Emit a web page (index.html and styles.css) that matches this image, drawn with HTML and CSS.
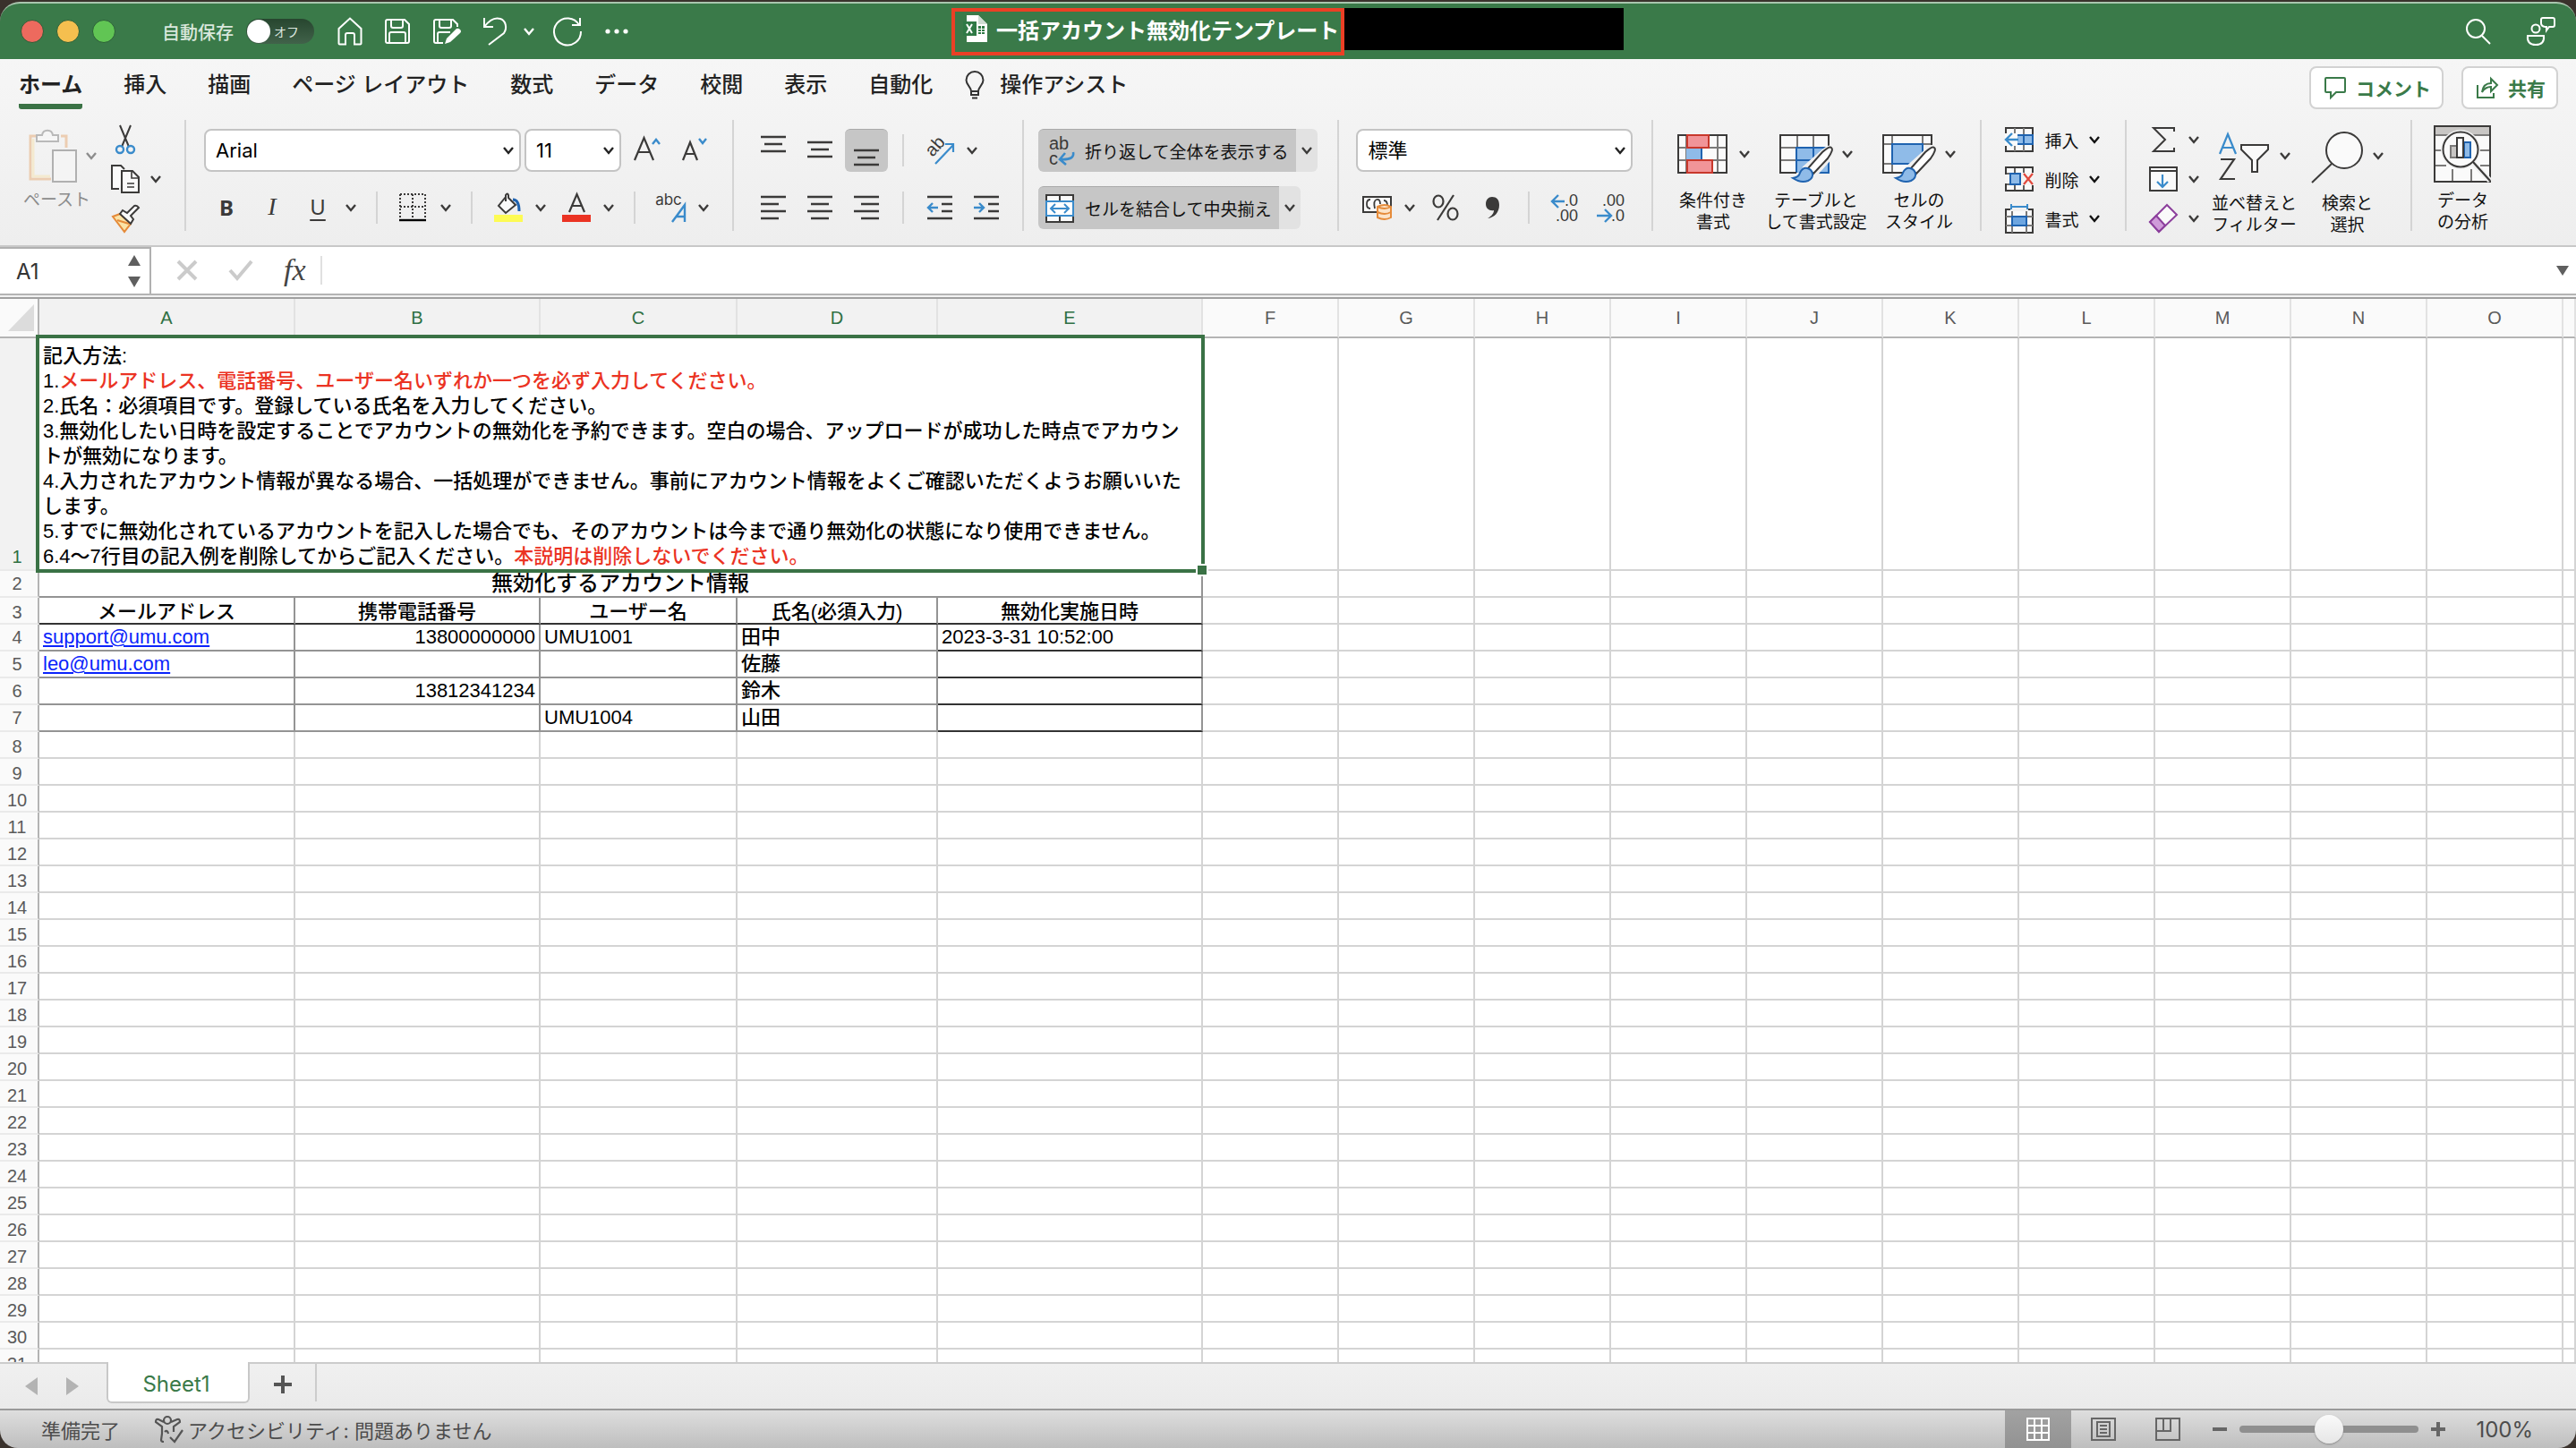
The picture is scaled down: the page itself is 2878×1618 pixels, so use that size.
FILE: index.html
```html
<!DOCTYPE html>
<html lang="ja">
<head>
<meta charset="utf-8">
<title>一括アカウント無効化テンプレート</title>
<link rel="stylesheet" href="styles.css">
</head>
<body>
<svg class="defs" aria-hidden="true">
  <symbol id="chev" viewBox="0 0 12 9"><path d="M1 1l5 6 5-6" fill="none" stroke="currentColor" stroke-width="2.4"/></symbol>
</svg>
<div class="window">
  <header class="titlebar">
    <div class="lights"><button class="light red" aria-label="閉じる"></button><button class="light amber" aria-label="しまう"></button><button class="light green" aria-label="拡大"></button></div>
    <label class="autosave" for="autosave">自動保存</label>
    <span class="switch"><input type="checkbox" id="autosave"><span>オフ</span></span>
    <div class="quick">
      <button aria-label="ホーム"><svg width="28" height="32" viewBox="0 0 28 32"><path d="M1.500 13L14 1.500 26.500 13V29.500q0 1-1 1H19V20q0-2-2-2H11q-2 0-2 2V30.500H2.500q-1 0-1-1z"/></svg></button>
      <button aria-label="保存"><svg width="30" height="30" viewBox="0 0 30 30"><path d="M4 2H23l5 5V26q0 2-2 2H4q-2 0-2-2V4q0-2 2-2zM8 2V9q0 2 2 2h9q2 0 2-2V2M6 28V18q0-2 2-2H22q2 0 2 2V28"/></svg></button>
      <button aria-label="名前を付けて保存"><svg width="32" height="30" viewBox="0 0 32 30"><path d="M12 28H4q-2 0-2-2V4q0-2 2-2H23l5 5v3M8 2V9q0 2 2 2h9q2 0 2-2V2M6 28V18q0-2 2-2H20"/><path d="M14 29l2-6L27 12q2-1 4 1t0 4L20 27z" fill="#fff" stroke="none"/></svg></button>
      <button aria-label="元に戻す" class="undo"><svg width="28" height="34" viewBox="0 0 28 34"><path d="M2 2V12H12M2 12C8 4 14 1 20 3s8 10 4 16L7 32"/></svg></button>
      <button aria-label="元に戻すの一覧"><svg width="12" height="9"><use href="#chev"/></svg></button>
      <button aria-label="やり直し" class="redo"><svg width="34" height="34" viewBox="0 0 34 34"><path d="M31 2V10H22M30 10A15 15 0 1 0 32 17"/></svg></button>
      <button aria-label="その他"><svg width="28" height="8" viewBox="0 0 28 8"><g fill="#fff" stroke="none"><circle cx="4" cy="4" r="2.600"/><circle cx="14" cy="4" r="2.600"/><circle cx="24" cy="4" r="2.600"/></g></svg></button>
    </div>
    <div class="doc">
      <h1 class="doc-title"><svg width="30" height="30" viewBox="0 0 30 30"><path d="M5 0H18L28 10V30H5z" fill="#fff"/><path d="M18 0V10H28z" fill="#cfdcd2"/><path d="M1 7H16V23H1z" fill="#2f7a45"/><path d="M5 10l6 10M11 10L5 20" stroke="#fff" stroke-width="2"/><path d="M18 12h3v3h-3zm4 0h3v3h-3zm-4 4h3v2h-3zm4 0h3v2h-3zm-4 3h3v2h-3zm4 0h3v2h-3z" fill="#2f7a45"/></svg>一括アカウント無効化テンプレート</h1>
      <div class="redacted"></div>
    </div>
    <div class="title-tools">
      <button aria-label="検索"><svg width="30" height="30" viewBox="0 0 30 30"><circle cx="12" cy="12" r="10"/><path d="M19 20l9 9"/></svg></button>
      <button aria-label="共同編集者"><svg width="34" height="34" viewBox="0 0 34 34"><circle cx="11" cy="14" r="4.500"/><path d="M2 22H20q1 10-9 10T2 22zM19 2H30q2 0 2 2V10q0 2-2 2H26l-3 4V12H21M19 2q-2 0-2 2V8q0 3 4 4"/></svg></button>
    </div>
  </header>

  <div class="ribbon">
    <nav class="tabs">
      <a href="#" class="active">ホーム</a><a href="#">挿入</a><a href="#">描画</a><a href="#">ページ レイアウト</a><a href="#">数式</a><a href="#">データ</a><a href="#">校閲</a><a href="#">表示</a><a href="#">自動化</a>
      <a href="#" class="assist"><svg width="22" height="32" viewBox="0 0 22 32"><path d="M7 23C7 18 1.500 16 1.500 10.500a9.500 9.500 0 0 1 19 0C20.500 16 15 18 15 23zM7 23V27H15V23M8 30.500h6" fill="none" stroke="#333" stroke-width="2"/></svg>操作アシスト</a>
      <div class="tab-actions">
        <button class="pill"><svg width="26" height="26" viewBox="0 0 26 26"><path d="M3 2H23q1 0 1 1V17q0 1-1 1H14L8 24V18H3q-1 0-1-1V3q0-1 1-1z"/></svg>コメント</button>
        <button class="pill"><svg width="26" height="26" viewBox="0 0 26 26"><path d="M2 10V24H20V19M7 18C8 11 11 8 17 8V3l7 7-7 7V12C13 12 10 13 7 18z"/></svg>共有</button>
      </div>
    </nav>

    <div class="groups">
      <section class="group clip">
        <button class="paste"><span class="icon-row"><svg width="54" height="62" viewBox="0 0 54 62"><path d="M8 9H2V57H25M36 9h6V22" fill="none" stroke="#eccdb2" stroke-width="3"/><path d="M5 12V54H24" fill="none" stroke="#f4ead0" stroke-width="3"/><path d="M9 15V8H15C16 1 26 1 27 8h6V15z" fill="#f6f6f6" stroke="#b9b9b9" stroke-width="2"/><path d="M27 25H53V60H27z" fill="#f4f4f4" stroke="#b0b0b0" stroke-width="2"/></svg><svg width="12" height="9"><use href="#chev"/></svg></span>ペースト</button>
        <div class="triple">
          <div><button aria-label="切り取り"><svg width="32" height="34" viewBox="0 0 32 34"><path d="M10 1L20 25M22 1L12 25" stroke="#3b3a39" stroke-width="2"/><g fill="none" stroke="#3a8bcb" stroke-width="2.400"><circle cx="10" cy="28" r="4"/><circle cx="22" cy="28" r="4"/></g></svg></button></div>
          <div><button aria-label="コピー"><svg width="32" height="32" viewBox="0 0 32 32"><g fill="#fafafa" stroke="#3b3a39" stroke-width="2"><path d="M9 27H1V1H11L15 5"/><path d="M12 7H24L31 14V31H12z"/></g><path d="M23 7V15H31M18 21h8M18 25h8" fill="none" stroke="#3b3a39" stroke-width="1.600"/></svg></button><button aria-label="コピーの種類"><svg width="12" height="9"><use href="#chev"/></svg></button></div>
          <div><button aria-label="書式のコピー"><svg width="32" height="32" viewBox="0 0 32 32"><path d="M2 14L10 11 22 22 15 31z" fill="#fbe3a6" stroke="#e58b3a" stroke-width="2"/><path d="M7 18l13 4" stroke="#e58b3a" stroke-width="2"/><path d="M10 11l3-4 5 3 8-8q3-1 5 2L22 13l3 4-3 5z" fill="#fafafa" stroke="#3b3a39" stroke-width="2"/></svg></button></div>
        </div>
      </section>
      <i class="rule"></i>
      <section class="group font">
        <div class="row">
          <span class="combo face"><select aria-label="フォント"><option>Arial</option></select><svg width="12" height="9"><use href="#chev"/></svg></span>
          <span class="combo size"><select aria-label="フォント サイズ"><option>11</option></select><svg width="12" height="9"><use href="#chev"/></svg></span>
          <button class="grow" aria-label="拡大"><svg width="32" height="28" viewBox="0 0 32 28"><path d="M1 27L11.500 2 22 27M5 18H18" fill="none" stroke="#3b3a39" stroke-width="2.200"/><path d="M21 9l4-5 4 5" fill="none" stroke="#3a8bcb" stroke-width="2.400"/></svg></button>
          <button class="shrink" aria-label="縮小"><svg width="30" height="28" viewBox="0 0 30 28"><path d="M1 27L9 7 17 27M4 20H14" fill="none" stroke="#3b3a39" stroke-width="2.200"/><path d="M19 3l4 5 4-5" fill="none" stroke="#3a8bcb" stroke-width="2.400"/></svg></button>
        </div>
        <div class="row font-cells">
          <button class="b">B</button><button class="i">I</button><button class="u">U</button><button aria-label="下線の種類"><svg width="12" height="9"><use href="#chev"/></svg></button><i class="rule short"></i>
          <button aria-label="罫線"><svg width="30" height="32" viewBox="0 0 30 32"><path d="M1 1H29M1 15H29" stroke="#3b3a39" stroke-width="2" stroke-dasharray="2 2"/><path d="M1 1V28M15 1V28M29 1V28" stroke="#3b3a39" stroke-width="2" stroke-dasharray="2 2"/><path d="M0 30H30" stroke="#000" stroke-width="2.400"/></svg></button><button aria-label="罫線の種類"><svg width="12" height="9"><use href="#chev"/></svg></button><i class="rule short"></i>
          <button aria-label="塗りつぶし"><svg width="32" height="34" viewBox="0 0 32 34"><path d="M0 25H32V33H0z" fill="#fdfb54"/><path d="M13 5L5 15l8 8 11-9L16 6V3q-1-3-3 0v7" fill="#fafafa" stroke="#3b3a39" stroke-width="2"/><path d="M21 8q7 0 7 13" fill="none" stroke="#1f63b0" stroke-width="3"/></svg></button><button aria-label="塗りつぶしの色"><svg width="12" height="9"><use href="#chev"/></svg></button>
          <button aria-label="文字色"><svg width="32" height="34" viewBox="0 0 32 34"><path d="M0 25H32V33H0z" fill="#eb3323"/><path d="M8 22L16.500 2 25 22M11 15H22" fill="none" stroke="#3b3a39" stroke-width="2.200"/></svg></button><button aria-label="文字の色"><svg width="12" height="9"><use href="#chev"/></svg></button><i class="rule short"></i>
          <button class="ruby" aria-label="ふりがな"><span>abc</span><svg width="18" height="22" viewBox="0 0 18 22"><path d="M1 21L15 2V21M6 15H15" fill="none" stroke="#3a8bcb" stroke-width="2.400"/></svg></button><button aria-label="ふりがなの設定"><svg width="12" height="9"><use href="#chev"/></svg></button>
        </div>
      </section>
      <i class="rule"></i>
      <section class="group align">
        <div class="row align-cells">
          <button aria-label="上揃え"><svg width="28" height="32" viewBox="0 0 28 32"><path d="M0 1H28M4 9H24M0 17H28"/></svg></button><button aria-label="上下中央揃え"><svg width="28" height="32" viewBox="0 0 28 32"><path d="M0 7H28M4 15H24M0 23H28"/></svg></button><button class="on" aria-label="下揃え"><svg width="28" height="32" viewBox="0 0 28 32"><path d="M0 15H28M4 23H24M0 31H28"/></svg></button><i class="rule short"></i>
          <button aria-label="方向"><svg class="free" width="34" height="32" viewBox="0 0 34 32"><text x="0" y="0" transform="translate(9 24) rotate(-48)" class="ab">ab</text><path d="M12 31L32 10M23 9H32V18" fill="none" stroke="#3a8bcb" stroke-width="2.200"/></svg></button><button class="start" aria-label="方向の種類"><svg width="12" height="9" class="free"><use href="#chev"/></svg></button>
        </div>
        <div class="row align-cells">
          <button aria-label="左揃え"><svg width="28" height="26" viewBox="0 0 28 26"><path d="M0 1H28M0 9H20M0 17H28M0 25H20"/></svg></button><button aria-label="中央揃え"><svg width="28" height="26" viewBox="0 0 28 26"><path d="M0 1H28M4 9H24M0 17H28M4 25H24"/></svg></button><button aria-label="右揃え"><svg width="28" height="26" viewBox="0 0 28 26"><path d="M0 1H28M8 9H28M0 17H28M8 25H28"/></svg></button><i class="rule short"></i>
          <button aria-label="インデント解除"><svg width="28" height="26" viewBox="0 0 28 26"><path d="M0 1H28M16 9H28M16 17H28M0 25H28"/><path class="blue" d="M12 13H1M6 8L1 13l5 5"/></svg></button><button aria-label="インデント"><svg width="28" height="26" viewBox="0 0 28 26"><path d="M0 1H28M16 9H28M16 17H28M0 25H28"/><path class="blue" d="M0 13H11M6 8l5 5-5 5"/></svg></button>
        </div>
      </section>
      <i class="rule"></i>
      <section class="group wrap">
        <div class="split"><button class="main"><svg width="36" height="34" viewBox="0 0 36 34"><text x="4" y="15" class="ab">ab</text><text x="4" y="32" class="ab">c</text><path d="M31 18q2 9-14 8M22 19l-6 7 7 6" fill="none" stroke="#3a8bcb" stroke-width="2.600"/></svg>折り返して全体を表示する</button><button class="more" aria-label="折り返しの設定"><svg width="12" height="9"><use href="#chev"/></svg></button></div>
        <div class="split"><button class="main"><svg width="36" height="32" viewBox="0 0 36 32"><path d="M1 1H31V31H1zM16 1V8M16 24V31" fill="#fafafa" stroke="#3b3a39" stroke-width="2"/><path d="M1 8H31V24H1z" fill="#fff" stroke="#3a8bcb" stroke-width="2"/><path d="M6 16H26M11 11l-5 5 5 5M21 11l5 5-5 5" fill="none" stroke="#3a8bcb" stroke-width="2"/></svg>セルを結合して中央揃え</button><button class="more" aria-label="結合の設定"><svg width="12" height="9"><use href="#chev"/></svg></button></div>
      </section>
      <i class="rule"></i>
      <section class="group number">
        <div class="row"><span class="combo format"><select aria-label="表示形式"><option>標準</option></select><svg width="12" height="9"><use href="#chev"/></svg></span></div>
        <div class="row number-cells">
          <button aria-label="通貨"><svg width="34" height="28" viewBox="0 0 34 28"><path d="M1 2H32V19H1z" fill="#fafafa" stroke="#3b3a39" stroke-width="2"/><path d="M9 5q-4 0-4 5t4 5M14 15q-2-9 2-10t4 5M24 6q4 0 4 6" fill="none" stroke="#3b3a39" stroke-width="1.800"/><path d="M17 13q8-4 15 0V25q-7 4-15 0z" fill="#fbe3c8" stroke="#e58b3a" stroke-width="2"/><path d="M17 13q8 4 15 0M17 19q8 4 15 0" fill="none" stroke="#e58b3a" stroke-width="2"/></svg></button><button aria-label="通貨の種類"><svg width="12" height="9"><use href="#chev"/></svg></button>
          <button aria-label="パーセント"><svg width="32" height="30" viewBox="0 0 32 30"><g fill="none" stroke="#3b3a39" stroke-width="2.200"><ellipse cx="8" cy="8" rx="5.500" ry="6.500"/><ellipse cx="24" cy="22" rx="5.500" ry="6.500"/><path d="M25 1L7 29"/></g></svg></button>
          <button aria-label="桁区切り"><svg width="18" height="26" viewBox="0 0 18 26"><path d="M8 1c5 0 8 3 8 9 0 8-5 14-13 15 5-3 7-6 7-9-5 1-9-2-9-7s3-8 7-8z" fill="#3b3a39"/></svg></button>
          <i class="rule short"></i>
          <button aria-label="小数点以下を増やす"><svg width="32" height="34" viewBox="0 0 32 34"><path d="M16 10H2M9 3L2 10l7 7" fill="none" stroke="#3a8bcb" stroke-width="2.400"/><text x="31" y="15" class="dec">.0</text><text x="31" y="32" class="dec">.00</text></svg></button>
          <button aria-label="小数点以下を減らす"><svg width="32" height="34" viewBox="0 0 32 34"><path d="M0 26H15M9 19l7 7-7 7" fill="none" stroke="#3a8bcb" stroke-width="2.400"/><text x="31" y="15" class="dec">.00</text><text x="31" y="32" class="dec">.0</text></svg></button>
        </div>
      </section>
      <i class="rule"></i>
      <section class="group styles">
        <button class="big"><span class="icon-row"><svg width="60" height="64" viewBox="0 0 60 64"><path d="M2 11H56V53H2z" fill="#fafafa"/><path d="M2 25H56M2 39H56M11 11V53M46 11V53" stroke="#7b7a79" stroke-width="2"/><path d="M2 11H56V53H2z" fill="none" stroke="#3b3a39" stroke-width="2"/><path d="M12 11H36V25H12zM12 39H40V53H12z" fill="#f19498" stroke="#c8382c" stroke-width="2"/><path d="M11 26H29V38H11z" fill="#8fbbe8"/><path d="M28 26V38" stroke="#1f63b0" stroke-width="2"/></svg><svg width="12" height="9"><use href="#chev"/></svg></span>条件付き<br>書式</button>
        <button class="big"><span class="icon-row"><svg width="60" height="64" viewBox="0 0 60 64"><path d="M1 11H55V53H1z" fill="#fafafa"/><path d="M20 25H55V53H20z" fill="#8fbbe8"/><path d="M1 25H55M1 39H20M20 11V25M38 11V25" stroke="#7b7a79" stroke-width="2"/><path d="M19 53V25H55M38 25V40M20 39H44M55 34V53H42" fill="none" stroke="#1f63b0" stroke-width="2"/><path d="M19 53H1V11H55V24" fill="none" stroke="#3b3a39" stroke-width="2"/><path d="M58 25q4 2-3 13L38 57 29 47 48 30q8-7 10-5z" fill="#f1f1f1" stroke="#f1f1f1" stroke-width="5"/><path d="M58 25q3 2-4 12L38 54l-6-6L48 30q8-7 10-5z" fill="#fff" stroke="#3b3a39" stroke-width="2"/><path d="M15 59q7-1 8-6 3-6 8-5t6 6q1 5-5 8-8 3-17-3z" fill="#8fbbe8" stroke="#1f63b0" stroke-width="2"/></svg><svg width="12" height="9"><use href="#chev"/></svg></span>テーブルと<br>して書式設定</button>
        <button class="big"><span class="icon-row"><svg width="60" height="64" viewBox="0 0 60 64"><path d="M1 11H55V21H45V53H1z" fill="#fafafa"/><path d="M1 21H55M1 43H11M11 11V53M45 11V21" stroke="#7b7a79" stroke-width="2"/><path d="M26 53H1V11H55V22" fill="none" stroke="#3b3a39" stroke-width="2"/><path d="M11 21H45V43H11z" fill="#8fbbe8" stroke="#1f63b0" stroke-width="2"/><path d="M58 25q4 2-3 13L38 57 29 47 48 30q8-7 10-5z" fill="#f1f1f1" stroke="#f1f1f1" stroke-width="5"/><path d="M58 25q3 2-4 12L38 54l-6-6L48 30q8-7 10-5z" fill="#fff" stroke="#3b3a39" stroke-width="2"/><path d="M15 59q7-1 8-6 3-6 8-5t6 6q1 5-5 8-8 3-17-3z" fill="#8fbbe8" stroke="#1f63b0" stroke-width="2"/></svg><svg width="12" height="9"><use href="#chev"/></svg></span>セルの<br>スタイル</button>
      </section>
      <i class="rule"></i>
      <section class="group cells">
        <button><svg width="32" height="32" viewBox="0 0 32 32"><path d="M1 3H31V29H1z" fill="#fafafa" stroke="#3b3a39" stroke-width="2"/><path d="M11 3V29M21 3V29M1 11H31M1 21H31" stroke="#7b7a79" stroke-width="2"/><path d="M13 11H31V21H13z" fill="#8fbbe8" stroke="#1f63b0" stroke-width="2"/><path d="M21 11V21" stroke="#1f63b0" stroke-width="2"/><path d="M0 9H14V23H0z" fill="#fafafa"/><path d="M15 16H1M8 9L1 16l7 7" fill="none" stroke="#3a8bcb" stroke-width="2.400"/></svg>挿入<svg width="12" height="9"><use href="#chev"/></svg></button>
        <button><svg width="32" height="32" viewBox="0 0 32 32"><path d="M1 3H31V29H1z" fill="#fafafa" stroke="#3b3a39" stroke-width="2"/><path d="M11 3V29M21 3V29M1 10H31M1 22H31" stroke="#3b3a39" stroke-width="1.600"/><path d="M0 11H5V21H0zM18 9H32V23H18z" fill="#f4f4f4"/><path d="M6 10H17V22H6z" fill="#8fbbe8" stroke="#1f63b0" stroke-width="2"/><path d="M21 10L31 22M31 10L21 22" stroke="#e0483c" stroke-width="2.200"/></svg>削除<svg width="12" height="9"><use href="#chev"/></svg></button>
        <button><svg width="32" height="34" viewBox="0 0 32 34"><path d="M1 7H31V33H1z" fill="#fafafa" stroke="#3b3a39" stroke-width="2"/><path d="M8 7V33M24 7V33M1 15H31M1 25H31" stroke="#7b7a79" stroke-width="2"/><path d="M8 15H24V25H8z" fill="#6ea6e0" stroke="#1f63b0" stroke-width="2"/><path d="M6 0H26V9H6z" fill="#f1f1f1"/><path d="M7 1V7M25 1V7M7 4H25" stroke="#3a8bcb" stroke-width="2"/></svg>書式<svg width="12" height="9"><use href="#chev"/></svg></button>
      </section>
      <i class="rule"></i>
      <section class="group edit">
        <div class="stack">
          <button aria-label="合計"><svg width="32" height="30" viewBox="0 0 32 30"><path d="M28 6V2H5L18 15 5 28H28V24" fill="none" stroke="#3b3a39" stroke-width="2"/></svg><svg width="12" height="9"><use href="#chev"/></svg></button>
          <button aria-label="フィル"><svg width="32" height="28" viewBox="0 0 32 28"><path d="M1 1H31V27H1zM1 5H31" fill="#fafafa" stroke="#3b3a39" stroke-width="2"/><path d="M15 9V23M9 17l6 6 6-6" fill="none" stroke="#3a8bcb" stroke-width="2.200"/></svg><svg width="12" height="9"><use href="#chev"/></svg></button>
          <button aria-label="クリア"><svg width="32" height="32" viewBox="0 0 32 32"><path d="M20 1L31 12 11 31 1 20z" fill="#fafafa" stroke="#8c3f9c" stroke-width="2"/><path d="M8 13L18 24 11 31 1 20z" fill="#cf9bd9" stroke="#8c3f9c" stroke-width="2"/></svg><svg width="12" height="9"><use href="#chev"/></svg></button>
        </div>
        <button class="big"><span class="icon-row"><svg width="60" height="64" viewBox="0 0 60 64"><path d="M3 29L12 7 21 29M6 22H18" fill="none" stroke="#3a8bcb" stroke-width="2.200"/><path d="M4 35H19L4 57H20" fill="none" stroke="#3b3a39" stroke-width="2.200"/><path d="M27 19H57V24L45 36V49H39V36L27 24z" fill="#fafafa" stroke="#3b3a39" stroke-width="2"/></svg><svg width="12" height="9"><use href="#chev"/></svg></span>並べ替えと<br>フィルター</button>
        <button class="big"><span class="icon-row"><svg width="60" height="64" viewBox="0 0 60 64"><circle cx="38" cy="25" r="20" fill="#fafafa" stroke="#3b3a39" stroke-width="2"/><path d="M24 40L2 61" stroke="#3b3a39" stroke-width="2"/></svg><svg width="12" height="9"><use href="#chev"/></svg></span>検索と<br>選択</button>
      </section>
      <i class="rule"></i>
      <section class="group analyze">
        <button class="big"><span class="icon-row"><svg width="64" height="64" viewBox="0 0 64 64"><path d="M1 1H63V63H1z" fill="#fafafa"/><path d="M1 1H63V10H1z" fill="#c8c6c4"/><path d="M1 11H63M1 28H12M50 28H63M1 45H14M52 45H63M21 49V63M42 49V63" stroke="#7b7a79" stroke-width="2"/><path d="M1 1H63V63H1z" fill="none" stroke="#3b3a39" stroke-width="2"/><circle cx="30" cy="27" r="22" fill="#f1f1f1"/><circle cx="30" cy="27" r="19.500" fill="#fafafa" stroke="#3b3a39" stroke-width="2"/><path d="M44 42L63 62" stroke="#f1f1f1" stroke-width="6"/><path d="M44 41L63 62" stroke="#3b3a39" stroke-width="2.200"/><path d="M19 23h7V36h-7z" fill="#c8c6c4" stroke="#7b7a79" stroke-width="2"/><path d="M34 19h7V36h-7z" fill="#8fbbe8" stroke="#1f63b0" stroke-width="2"/><path d="M26 14h7V36h-7z" fill="#fff" stroke="#3b3a39" stroke-width="2"/></svg></span>データ<br>の分析</button>
      </section>
    </div>
  </div>

  <div class="formula">
    <div class="namebox"><input aria-label="名前ボックス" value="A1"><svg width="16" height="36" viewBox="0 0 16 36"><path d="M8 0l7 12H1zM8 36l7-12H1z" fill="#5f5f5f"/></svg></div>
    <button aria-label="キャンセル"><svg width="24" height="24" viewBox="0 0 24 24"><path d="M2 2L22 22M22 2L2 22" stroke="#cbcbcb" stroke-width="4"/></svg></button>
    <button aria-label="確定"><svg width="28" height="24" viewBox="0 0 28 24"><path d="M2 12l8 9L26 2" fill="none" stroke="#cbcbcb" stroke-width="4"/></svg></button>
    <button class="fx">fx</button>
    <input class="fx-input" aria-label="数式バー">
    <button aria-label="数式バーの展開" class="expand"><svg width="14" height="11" viewBox="0 0 14 11"><path d="M0 0H14L7 11z" fill="#5f5f5f"/></svg></button>
  </div>

  <main class="sheet">
    <table>
      <colgroup><col class="c-n"><col class="c-a"><col class="c-b"><col class="c-c"><col class="c-d"><col class="c-e"><col class="c-x" span="10"><col></colgroup>
      <thead><tr><th class="corner"><svg width="30" height="30" viewBox="0 0 30 30"><path d="M29 0V30H0z" fill="#dcdcdc"/></svg></th><th class="sel">A</th><th class="sel">B</th><th class="sel">C</th><th class="sel">D</th><th class="sel">E</th><th>F</th><th>G</th><th>H</th><th>I</th><th>J</th><th>K</th><th>L</th><th>M</th><th>N</th><th>O</th><th></th></tr></thead>
      <tbody>
        <tr class="tall"><th class="sel">1</th><td colspan="5" class="note">記入方法:<br>1.<em>メールアドレス、電話番号、ユーザー名いずれか一つを必ず入力してください。</em><br>2.氏名：必須項目です。登録している氏名を入力してください。<br>3.無効化したい日時を設定することでアカウントの無効化を予約できます。空白の場合、アップロードが成功した時点でアカウントが無効になります。<br>4.入力されたアカウント情報が異なる場合、一括処理ができません。事前にアカウント情報をよくご確認いただくようお願いいたします。<br>5.すでに無効化されているアカウントを記入した場合でも、そのアカウントは今まで通り無効化の状態になり使用できません。<br>6.4〜7行目の記入例を削除してからご記入ください。<em>本説明は削除しないでください。</em><span class="handle"></span></td><td></td><td></td><td></td><td></td><td></td><td></td><td></td><td></td><td></td><td></td><td></td></tr>
        <tr><th>2</th><td colspan="5" class="g title">無効化するアカウント情報</td><td></td><td></td><td></td><td></td><td></td><td></td><td></td><td></td><td></td><td></td><td></td></tr>
        <tr class="low"><th>3</th><td class="g k mid">メールアドレス</td><td class="g k mid">携帯電話番号</td><td class="g k mid">ユーザー名</td><td class="g k mid">氏名(必須入力)</td><td class="g k mid">無効化実施日時</td><td></td><td></td><td></td><td></td><td></td><td></td><td></td><td></td><td></td><td></td><td></td></tr>
        <tr><th>4</th><td class="g"><a href="mailto:support@umu.com">support@umu.com</a></td><td class="g num">13800000000</td><td class="g">UMU1001</td><td class="g">田中</td><td class="g k">2023-3-31 10:52:00</td><td></td><td></td><td></td><td></td><td></td><td></td><td></td><td></td><td></td><td></td><td></td></tr>
        <tr><th>5</th><td class="g"><a href="mailto:leo@umu.com">leo@umu.com</a></td><td class="g"></td><td class="g"></td><td class="g">佐藤</td><td class="g k"></td><td></td><td></td><td></td><td></td><td></td><td></td><td></td><td></td><td></td><td></td><td></td></tr>
        <tr><th>6</th><td class="g"></td><td class="g num">13812341234</td><td class="g"></td><td class="g">鈴木</td><td class="g k"></td><td></td><td></td><td></td><td></td><td></td><td></td><td></td><td></td><td></td><td></td><td></td></tr>
        <tr><th>7</th><td class="g"></td><td class="g"></td><td class="g">UMU1004</td><td class="g">山田</td><td class="g k"></td><td></td><td></td><td></td><td></td><td></td><td></td><td></td><td></td><td></td><td></td><td></td></tr>
      </tbody>
      <tbody id="blank"></tbody>
    </table>
  </main>

  <div class="sheetbar">
    <button aria-label="前のシート"><svg width="16" height="22" viewBox="0 0 16 22"><path d="M15 1V21L1 11z" fill="#b3b3b3"/></svg></button>
    <button aria-label="次のシート"><svg width="16" height="22" viewBox="0 0 16 22"><path d="M1 1V21L15 11z" fill="#b3b3b3"/></svg></button>
    <button class="tab">Sheet1</button>
    <button class="add" aria-label="シートの追加"><svg width="20" height="20" viewBox="0 0 20 20"><path d="M10 0V20M0 10H20" stroke="#555" stroke-width="4"/></svg></button>
  </div>

  <footer class="status">
    <span>準備完了</span>
    <button class="a11y"><svg width="34" height="32" viewBox="0 0 34 32"><g fill="none" stroke="#555" stroke-width="2.200"><circle cx="15" cy="6" r="4"/><path d="M11 8L5 5Q2 4 2 8l7 5v8L8 28q0 2 3 2M19 8l7-3q3-1 3 3l-7 5v6M12 19q3-3 4 2M18 25l5 5 9-13"/></g></svg>アクセシビリティ: 問題ありません</button>
    <div class="views">
      <button class="on" aria-label="標準"><svg width="28" height="28" viewBox="0 0 28 28"><path d="M2 2H26V26H2zM10 2V26M18 2V26M2 10H26M2 18H26" fill="none" stroke="#fff" stroke-width="2"/></svg></button>
      <button aria-label="ページ レイアウト"><svg width="28" height="28" viewBox="0 0 28 28"><path d="M1 2H27V26H1zM7 6H21V22H7zM10 10h8M10 14h8M10 18h8" fill="none" stroke="#666" stroke-width="2"/></svg></button>
      <button aria-label="改ページ プレビュー"><svg width="28" height="28" viewBox="0 0 28 28"><path d="M1 2H27V26H1zM1 16H17V2M9 2V16" fill="none" stroke="#666" stroke-width="2"/></svg></button>
    </div>
    <button aria-label="縮小"><svg width="16" height="16" viewBox="0 0 16 16"><path d="M0 8H16" stroke="#666" stroke-width="4"/></svg></button>
    <input type="range" aria-label="ズーム" min="0" max="100" value="50">
    <button aria-label="拡大"><svg width="16" height="16" viewBox="0 0 16 16"><path d="M0 8H16M8 0V16" stroke="#666" stroke-width="4"/></svg></button>
    <span class="zoom">100%</span>
  </footer>
</div>
<script src="sheet.js"></script>
</body>
</html>
```
FILE: styles.css
```css
* { box-sizing: border-box; }
body {
  margin: 0;
  background: #3a322c;
  font-family: Inter, "Noto Sans CJK JP", sans-serif;
  color: #222;
}
button { border: 0; padding: 0; margin: 0; background: none; font: inherit; color: inherit; display: inline-flex; align-items: center; justify-content: center; }
a { color: inherit; text-decoration: none; }
svg { flex: none; display: block; overflow: visible; }
.defs { position: absolute; width: 0; height: 0; }

.window { display: flex; flex-direction: column; height: 100vh; padding-top: 2px; }

/* Title bar */
.titlebar { display: flex; align-items: center; height: 64px; flex: none; background: #3a7a49; border-top: 2px solid #a9c6ae; border-radius: 22px 22px 0 0; color: #fff; padding: 0 22px 0 23px; }
.lights { display: flex; gap: 14px; margin-right: 52px; }
.light { width: 26px; height: 26px; border-radius: 50%; border: 1px solid #2c5f38; }
.red { background: #ed6a5e; }
.amber { background: #f5bf4f; }
.green { background: #61c554; }
.autosave { font-size: 20px; font-weight: 500; color: #d9e7dc; margin-right: 14px; }
.switch { display: flex; align-items: center; gap: 4px; width: 76px; height: 28px; border-radius: 14px; padding: 0 1px; background: linear-gradient(#27462f, #41624a); font-size: 14px; color: #dfe9e1; }
.switch input { appearance: none; margin: 0; width: 26px; height: 26px; border-radius: 50%; background: #fff; }
.quick { display: flex; align-items: center; gap: 24px; margin-left: 26px; }
.quick svg, .title-tools svg { fill: none; stroke: #fff; stroke-width: 2; }
.quick .undo { margin-right: -6px; }
.quick .redo { margin-left: -4px; }
.doc { display: flex; align-items: flex-start; margin-left: 360px; height: 53px; align-self: center; }
.doc-title { display: flex; align-items: center; gap: 8px; margin: 0; height: 53px; border: 4px solid #eb4025; padding: 0 2px 6px 8px; font-size: 24px; font-weight: 700; white-space: nowrap; }
.redacted { width: 312px; height: 47px; background: #000; }
.title-tools { display: flex; align-items: center; gap: 38px; margin-left: auto; }

/* Ribbon */
.ribbon { flex: none; background: linear-gradient(#f6f6f6, #eee); border-bottom: 2px solid #c8c8c8; padding-bottom: 8px; }
.tabs { display: flex; align-items: flex-start; gap: 46px; height: 68px; padding: 8px 20px 0 21px; font-size: 24px; font-weight: 500; }
.tabs a { display: flex; align-items: center; height: 48px; line-height: 42px; padding-bottom: 6px; white-space: nowrap; }
.tabs .active { font-weight: 700; border-bottom: 6px solid #3a7245; padding-bottom: 0; border-radius: 0 0 3px 3px; }
.tabs .assist { gap: 17px; margin-left: -10px; }
.tab-actions { display: flex; gap: 20px; margin-left: auto; }
.pill { height: 48px; padding: 0 12px 0 14px; gap: 10px; font-size: 21px; font-weight: 700; color: #3a7a49; background: #fff; border: 2px solid #d2d2d2; border-radius: 8px; }
.pill svg { fill: none; stroke: #3a7a49; stroke-width: 2; }
.groups { display: flex; align-items: flex-start; height: 132px; font-size: 19px; color: #3b3a39; }
.rule { width: 2px; height: 124px; background: #d4d4d4; flex: none; }
.rule.short { height: 36px; align-self: center; justify-self: center; }
.group { display: flex; flex: none; }
.row { display: flex; align-items: center; height: 48px; }
.font, .align, .wrap, .number { flex-direction: column; gap: 16px; padding-top: 10px; }
.icon-row { display: flex; align-items: center; height: 64px; gap: 10px; }
.clip { width: 206px; padding-left: 26px; }
.paste { flex-direction: column; align-items: flex-start; justify-content: flex-start; padding-top: 8px; color: #8c8c8c; width: 98px; line-height: 24px; }
.paste .icon-row { padding-left: 6px; margin-bottom: 6px; }
.triple div { display: flex; align-items: center; height: 44px; gap: 12px; }
.font { padding: 10px 14px 0 20px; }
.combo { display: grid; align-items: center; height: 48px; color: #222; }
.combo select { grid-area: 1 / 1; appearance: none; width: 100%; height: 48px; padding: 0 11px; border: 2px solid #c4c4c4; border-radius: 8px; background: #fff; font: 22px Inter, "Noto Sans CJK JP", sans-serif; color: #000; }
.combo svg { grid-area: 1 / 1; justify-self: end; margin-right: 8px; pointer-events: none; }
.face { width: 354px; margin-right: 4px; }
.size { width: 108px; }
.grow { margin: 0 22px 4px 14px; }
.shrink { margin-bottom: 4px; }
.font-cells { display: grid; grid-template-columns: 50px 52px 50px 24px 34px 46px 28px 30px 52px 20px 60px 12px 46px 36px 36px; }
.b { font: 700 24px "Noto Sans", sans-serif; }
.i { font: italic 28px "Liberation Serif", serif; }
.font-cells .u { font: 24px "Noto Sans", sans-serif; text-decoration: underline; text-underline-offset: 5px; padding-bottom: 4px; }
.font-cells .b, .font-cells .i { padding-bottom: 2px; }
.ruby { font-size: 17px; align-items: flex-start; }
.ruby span { line-height: 16px; }
.ruby svg { margin: 12px 0 0 -12px; }
.align { padding: 10px 14px 0 18px; }
.align-cells { display: grid; grid-template-columns: 52px 52px 52px 30px 52px 52px; justify-items: center; }
.align-cells svg { fill: none; stroke: #3b3a39; stroke-width: 2.4; }
.align-cells svg.free { stroke: none; }
.align-cells .blue { stroke: #3a8bcb; }
.align-cells .start { justify-self: start; padding-left: 4px; }
.align-cells .on { width: 48px; height: 48px; border-radius: 6px; background: #c6c6c6; border-top: 1px solid #aaa; }
.ab { font: 20px "Liberation Sans", sans-serif; fill: #3b3a39; }
.wrap { padding: 10px 22px 0 16px; }
.split { display: flex; height: 48px; color: #111; }
.main { padding: 0 9px 0 8px; gap: 8px; border-radius: 6px 0 0 6px; background: #c6c6c6; border-top: 1px solid #aaa; white-space: nowrap; }
.more { width: 24px; border-radius: 0 6px 6px 0; background: #e2e2e2; color: #3b3a39; }
.number { padding: 10px 18px 0 19px; }
.format { width: 309px; }
.number-cells { display: grid; grid-template-columns: 48px 24px 56px 50px 30px 50px 54px; }
.dec { font: 18px "Liberation Sans", sans-serif; fill: #3b3a39; text-anchor: end; }
.big { flex-direction: column; padding-top: 6px; line-height: 24px; color: #111; white-space: nowrap; }
.big .icon-row { margin-bottom: 9px; color: #3b3a39; }
.styles { display: grid; grid-template-columns: 115px 115px 115px; padding: 0 11px 0 9px; }
.cells { flex-direction: column; padding: 0 28px 0 26px; color: #111; }
.cells button { height: 44px; gap: 12px; }
.edit { display: grid; grid-template-columns: 64px 106px 104px; padding: 0 18px 0 25px; }
.edit .big:last-child { width: 102px; }
.stack button { display: flex; height: 44px; gap: 12px; }
.analyze { padding-left: 24px; }

/* Formula bar */
.formula { display: flex; align-items: center; flex: none; height: 58px; padding-bottom: 4px; background: #fff; border-bottom: 2px solid #a0a0a0; box-shadow: inset 0 -2px #f1f1f1, inset 0 -4px #b4b4b4; }
.namebox { display: flex; align-items: center; align-self: stretch; width: 169px; padding: 0 9px 0 18px; border-top: 2px solid #b0b0b0; border-right: 2px solid #b0b0b0; margin-right: 28px; }
.namebox input { flex: 1; min-width: 0; border: 0; padding: 0; font: 24px Inter, sans-serif; color: #333; }
.formula > button { margin-right: 34px; }
.formula .fx { font: italic 34px "Liberation Serif", serif; margin-right: 16px; color: #444; }
.fx-input { flex: 1; min-width: 0; height: 32px; border: 0; border-left: 2px solid #e0e0e0; font: 22px Inter, sans-serif; }
.formula .expand { margin-right: 8px; }

/* Grid */
.sheet { flex: 1; min-height: 0; overflow: hidden; background: #fff; }
table { width: 100%; table-layout: fixed; border-collapse: separate; border-spacing: 0; font: 500 22px "Liberation Sans", "Noto Sans CJK JP", sans-serif; color: #000; }
.c-n { width: 44px; }
.c-a { width: 286px; }
.c-b { width: 274px; }
.c-c { width: 220px; }
.c-d { width: 224px; }
.c-e { width: 296px; }
.c-x { width: 152px; }
th, td { height: 30px; padding: 0 4px; border: 0 solid #d4d4d4; border-width: 0 2px 2px 0; line-height: 28px; white-space: nowrap; text-align: left; }
th { font-size: 20px; font-weight: 400; text-align: center; color: #5a5a5a; background: #fafafa; }
thead th { height: 44px; border-right-color: #e2e2e2; border-bottom-color: #b4b4b4; }
tbody th { border-right-color: #b4b4b4; border-bottom-color: #eaeaea; padding: 0 4px 0 0; }
thead th.corner { border-right-color: #b4b4b4; padding: 0; }
.corner svg { margin-left: 9px; }
th.sel { color: #2f7043; background: #f2f2f2; }
.tall th, .tall td { height: 260px; vertical-align: bottom; }
.low th, .low td { padding-top: 4px; line-height: 24px; }
.note { position: relative; white-space: normal; }
.note::after { content: ""; position: absolute; inset: -4px; border: 4px solid #3a7245; }
.note em { font-style: normal; color: #eb3323; }
.handle { position: absolute; right: -6px; bottom: -6px; z-index: 1; width: 10px; height: 10px; background: #3a7245; box-shadow: 0 0 0 2px #fff; }
.g { border-color: #949494; }
.k { border-bottom-color: #333; }
.title { font-size: 24px; text-align: center; }
.mid { text-align: center; }
.num { text-align: right; }
td a { color: #0b24fb; text-decoration: underline; }

/* Sheet tabs */
.sheetbar { display: flex; align-items: flex-start; flex: none; height: 52px; padding-left: 27px; background: linear-gradient(#f0f0f0, #eaeaea); border-top: 2px solid #ccc; }
.sheetbar button { height: 50px; margin-right: 30px; }
.sheetbar .tab { height: 46px; width: 160px; margin: -2px 0 0; padding: 4px 4px 0 0; background: #fff; border: 2px solid #c8c8c8; border-width: 0 2px 2px; border-radius: 0 0 6px 6px; font-size: 24px; color: #3a7a49; }
.sheetbar .add { width: 75px; height: 42px; margin: 0; padding-top: 4px; border-right: 2px solid #ccc; }

/* Status bar */
.status { display: flex; align-items: center; flex: none; height: 44px; padding: 0 48px 0 46px; border-top: 2px solid #9a9a9a; background: linear-gradient(#dedede, #bebebe); border-radius: 0 0 20px 20px; font-size: 22px; color: #4c4c4c; }
.a11y { margin-left: 38px; gap: 4px; }
.views { display: flex; align-self: stretch; margin-left: auto; margin-right: 14px; }
.views button { width: 72px; }
.views .on { width: 74px; background: linear-gradient(#a2a2a2, #929292); }
.status input { appearance: none; width: 200px; height: 8px; margin: 0 14px; border-radius: 4px; background: #8f8f8f; }
.status input::-webkit-slider-thumb { appearance: none; width: 32px; height: 32px; border-radius: 50%; background: linear-gradient(#fafafa, #e6e6e6); box-shadow: 0 1px 2px #888; }
.zoom { margin-left: 34px; font-size: 24px; }
```
FILE: sheet.js
```js
// Fill the grid with empty rows below the data.
const blank = document.getElementById("blank");
for (let n = 8; n <= 31; n++) {
  const row = blank.insertRow();
  row.className = "low";
  const head = document.createElement("th");
  head.textContent = n;
  row.append(head);
  for (let c = 0; c < 16; c++) row.insertCell();
}
```
